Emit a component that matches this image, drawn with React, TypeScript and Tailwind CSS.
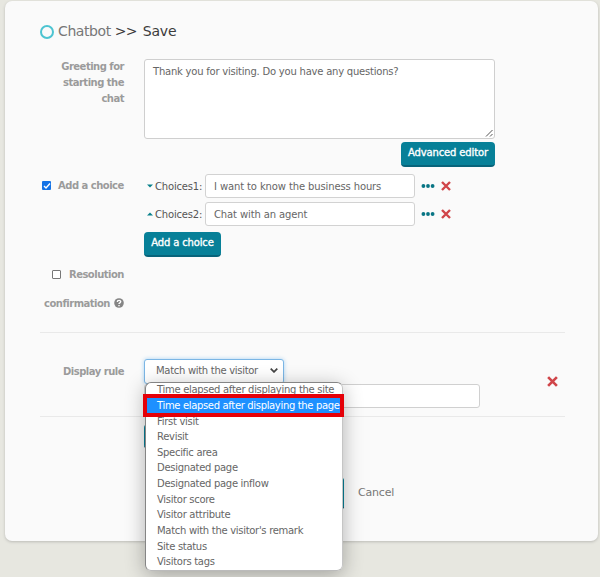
import React from "react";

const options = [
  "First visit",
  "Revisit",
  "Specific area",
  "Designated page",
  "Designated page inflow",
  "Visitor score",
  "Visitor attribute",
  "Match with the visitor's remark",
  "Site status",
  "Visitors tags",
];

const labelText = "text-[10px] font-bold tracking-[-0.5px] text-[#9b9b9b]";

function Cross({ className }: { className: string }) {
  return (
    <svg viewBox="0 0 10 10" className={className} fill="none" stroke="#d04549" strokeWidth="2.4">
      <path d="M1 1 9 9M9 1 1 9" />
    </svg>
  );
}

function Dots() {
  return (
    <svg viewBox="0 0 14 4" className="ml-[6px] h-1 w-[14px]" fill="#087584">
      <circle cx="2.4" cy="2" r="1.9" />
      <circle cx="7" cy="2" r="1.9" />
      <circle cx="11.6" cy="2" r="1.9" />
    </svg>
  );
}

function Choice({ up, label, value }: { up?: boolean; label: string; value: string }) {
  return (
    <div className="flex h-6 items-center">
      <svg viewBox="0 0 6 4" className="ml-[3px] h-1 w-[6px]" fill="#08808a">
        <path d={up ? "M0 3.6 3 .4 6 3.6Z" : "M0 .4 3 3.6 6 .4Z"} />
      </svg>
      <span className="ml-[2px] w-[50px] whitespace-nowrap text-[10px] tracking-[-0.18px] text-[#555]">{label}</span>
      <div className="flex h-6 w-[210px] items-center rounded-[3px] border border-[#d2d2d2] bg-white pl-[8px] text-[10px] tracking-[-0.12px] text-[#666]">
        {value}
      </div>
      <Dots />
      <Cross className="ml-[6px] h-[10px] w-[10px]" />
    </div>
  );
}

function Button({ children, className }: { children?: React.ReactNode; className: string }) {
  return (
    <button
      className={`flex h-[25px] items-start justify-center whitespace-nowrap rounded-[4px] border-b-2 border-[#07637a] bg-[#078098] pt-[4px] text-[10px] leading-[13px] tracking-[-0.15px] text-white [-webkit-text-stroke:0.35px_white] ${className}`}
    >
      {children}
    </button>
  );
}

export default function App() {
  return (
    <main className="relative h-[577px] w-[600px] overflow-hidden bg-[#e7e7e0] pt-px pl-[5px] font-['Verdana','DejaVu_Sans',sans-serif]">
      <section className="h-[540px] w-[593px] rounded-[7px] bg-[#fafafa] pl-[35px] shadow-[0_1px_3px_#bbbbb6]">
        <h1 className="flex h-[58px] items-center pt-[3px] text-[14px] text-[#3c3c3c]">
          <span className="h-[14px] w-[14px] rounded-full border-2 border-[#4dc4d1]" />
          <span className="ml-1 tracking-[-0.4px] text-[#777]">Chatbot</span>
          <span className="ml-[4px] tracking-[-0.8px]">&gt;&gt;</span>
          <span className="ml-[6px] tracking-[-0.2px]">Save</span>
        </h1>

        <div className="flex h-[115px]">
          <div className={`w-[84px] pt-[-1px] text-right leading-[16px] ${labelText}`}>
            Greeting for<br />starting the<br />chat
          </div>
          <div className="ml-5 w-[351px]">
            <div className="relative h-[80px] rounded-[3px] border border-[#cfcfcf] bg-white pt-[5px] pl-[8px] text-[10px] leading-[13px] tracking-[-0.22px] text-[#666]">
              Thank you for visiting. Do you have any questions?
              <svg viewBox="0 0 8 8" className="absolute right-px bottom-px h-2 w-2" stroke="#555" fill="none">
                <path d="M1 7.5 7.5 1M5 7.5 7.5 5" />
              </svg>
            </div>
            <Button className="mt-[3px] ml-auto w-[94px]">Advanced editor</Button>
          </div>
        </div>

        <div className="flex h-[158px]">
          <div className="w-[84px]">
            <div className={`flex h-6 items-center pb-px ${labelText}`}>
              <span className="mr-[7px] ml-[2px] grid h-[9px] w-[9px] shrink-0 place-items-center rounded-[1px] bg-[#1473e6]">
                <svg viewBox="0 0 8 8" className="h-2 w-2" fill="none" stroke="white" strokeWidth="1.4"><path d="m1 4 2 2 4-4.5" /></svg>
              </span>
              <span className="whitespace-nowrap">Add a choice</span>
            </div>
            <div className={`mt-[64px] flex h-6 items-center justify-end ${labelText}`}>
              <span className="mr-[8px] h-[9px] w-[9px] rounded-[1px] border border-[#777] bg-white" />
              <span>Resolution</span>
            </div>
            <div className={`mt-[5px] flex h-6 items-center justify-end ${labelText}`}>
              <span>confirmation</span>
              <svg viewBox="0 0 10 10" className="ml-1 h-[10px] w-[10px] shrink-0" fill="none">
                <circle cx="5" cy="5" r="4.8" fill="#858585" />
                <path d="M3.3 4C3.3 1.8 6.8 1.9 6.7 3.8 6.6 4.9 5 4.8 5 6.1M5 7v1.3" stroke="white" strokeWidth="1.4" />
              </svg>
            </div>
          </div>
          <div className="ml-5 flex flex-col items-start">
            <Choice label="Choices1:" value="I want to know the business hours" />
            <div className="h-1" />
            <Choice up label="Choices2:" value="Chat with an agent" />
            <Button className="mt-[6px] w-[77px]">Add a choice</Button>
          </div>
        </div>

        <div className="h-[85px] w-[525px] border-y border-[#e9e9e9] pt-[26px]">
          <div className="flex">
            <span className={`w-[84px] text-right leading-[26px] ${labelText}`}>Display rule</span>
            <div className="ml-5">
              <div className="flex h-[25px] w-[140px] items-center justify-between rounded-[3px] border border-[#7bb6e5] bg-white pr-[5px] pb-[2px] pl-[11px] text-[10px] tracking-[-0.3px] text-[#666] shadow-[0_0_4px_#a7d2f3]">
                <span className="whitespace-nowrap">Match with the visitor</span>
                <svg viewBox="0 0 8 5" className="h-[5px] w-2" fill="none" stroke="#444" strokeWidth="1.7"><path d="m.7.7 3.3 3.2L7.3.7" /></svg>
              </div>
              <div className="h-6 w-[336px] rounded-[3px] border border-[#d0d0d0] bg-white" />
            </div>
            <Cross className="mt-[17px] ml-[67px] h-[11px] w-[11px]" />
          </div>
        </div>

        <div className="ml-[104px] pt-[7px]">
          <Button className="w-[77px]" />
          <div className="mt-[29px] flex items-center">
            <div className="ml-[60px] h-[31px] w-[140px] rounded-[2px] border-b-2 border-[#07586b] bg-[#078098]" />
            <span className="ml-[14px] pb-px text-[11px] tracking-[-0.2px] text-[#777]">Cancel</span>
          </div>
        </div>
      </section>

      <div className="pointer-events-none absolute top-[382px] left-[145px] h-[189px] w-[198px] rounded-[6px] shadow-[0_4px_20px_#0000004d]" />
      <div className="absolute top-[382px] left-[145px] h-[189px] w-[198px] overflow-hidden rounded-[6px] border border-[#858585] border-r-[#c5c5c5] border-b-[#bbb] bg-white text-[10px] tracking-[-0.3px] whitespace-nowrap text-[#666]">
        <div className="pl-[11px] leading-[14px]">Time elapsed after displaying the site</div>
        <div className="mt-[16.5px]">
          {options.map((option) => (
            <div key={option} className="h-[15.65px] pl-[11px] leading-[15.65px]">{option}</div>
          ))}
        </div>
      </div>
      <div className="absolute top-[394px] left-[143px] h-[23px] w-[201px] border-4 border-[#e50008] bg-[#1e90ff] pl-[10px] text-[10px] leading-[15px] tracking-[-0.34px] whitespace-nowrap text-white">
        Time elapsed after displaying the page
      </div>
    </main>
  );
}
